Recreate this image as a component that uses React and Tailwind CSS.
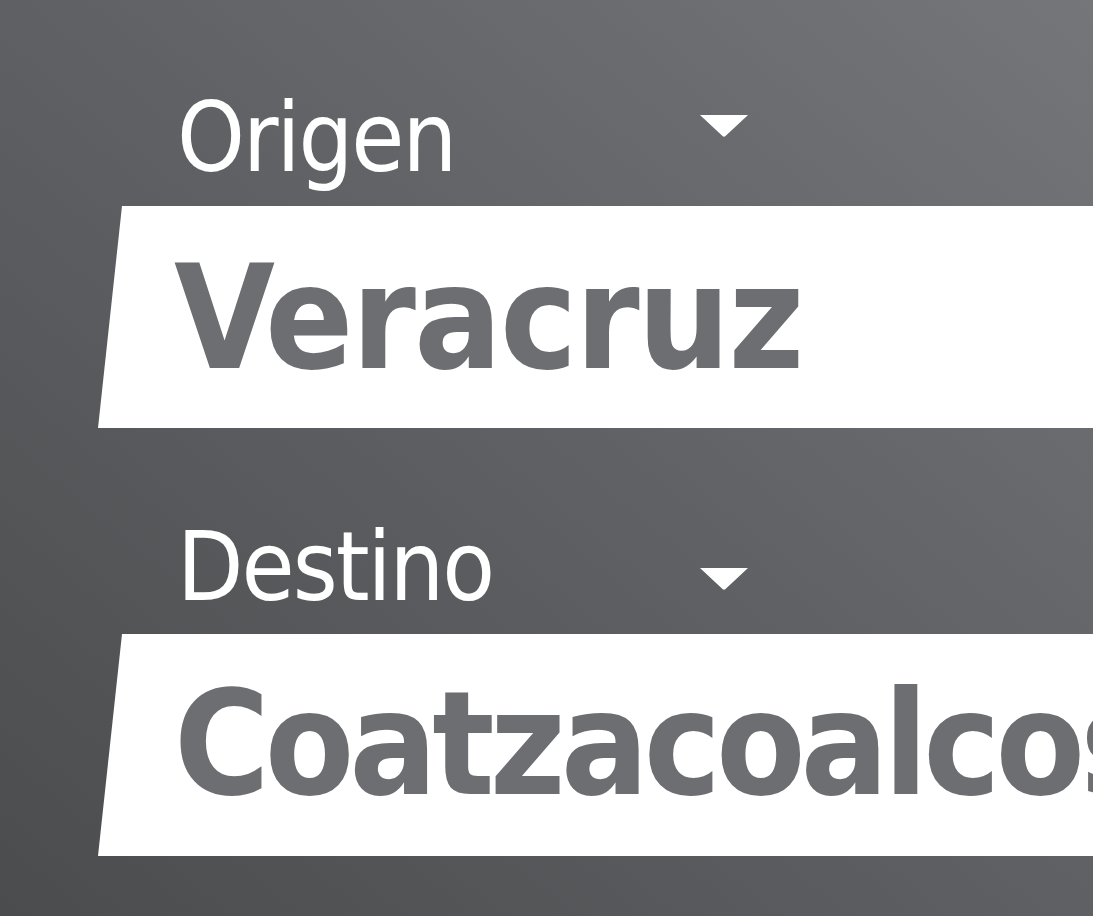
import React from 'react';

const font = { fontFamily: '"DejaVu Sans Condensed", "DejaVu Sans", sans-serif' };

function Caret({ className }) {
  return (
    <svg width="48" height="22" viewBox="0 0 48 22" className={className}>
      <path d="M0 0 H48 L25.5 21 Q24 22.4 22.5 21 Z" fill="#ffffff" />
    </svg>
  );
}

function Field({ label, value, labelTop, caretTop, barTop, valueTop, tracking }) {
  return (
    <div className={labelTop}>
      <div className="flex items-start pl-[177px]">
        <div className="w-[523px] text-white text-[96px] leading-none tracking-[-2px] font-stretch-condensed">{label}</div>
        <Caret className={caretTop} />
      </div>
      <div
        className={`${barTop} ml-[98px] h-[222px] bg-white [clip-path:polygon(24px_0,100%_0,100%_100%,0_100%)]`}
      >
        <div
          className={`${valueTop} ${tracking} pl-[76px] text-[145px] leading-none font-bold text-[#6d6e72] whitespace-nowrap font-stretch-condensed`}
        >
          {value}
        </div>
      </div>
    </div>
  );
}

export default function App() {
  return (
    <div
      style={font}
      className="w-[1093px] h-[916px] overflow-hidden bg-linear-to-tr from-[#4b4c4e] via-[#5f6063] to-[#75767a]"
    >
      <Field
        label="Origen"
        value="Veracruz"
        labelTop="pt-[90px]"
        caretTop="mt-[25px]"
        barTop="mt-[20px]"
        valueTop="pt-[39px]"
        tracking="tracking-[-2px]"
      />
      <Field
        label="Destino"
        value="Coatzacoalcos"
        labelTop="mt-[91px]"
        caretTop="mt-[49px]"
        barTop="mt-[19px]"
        valueTop="pt-[37px]"
        tracking="tracking-[-5px]"
      />
    </div>
  );
}
